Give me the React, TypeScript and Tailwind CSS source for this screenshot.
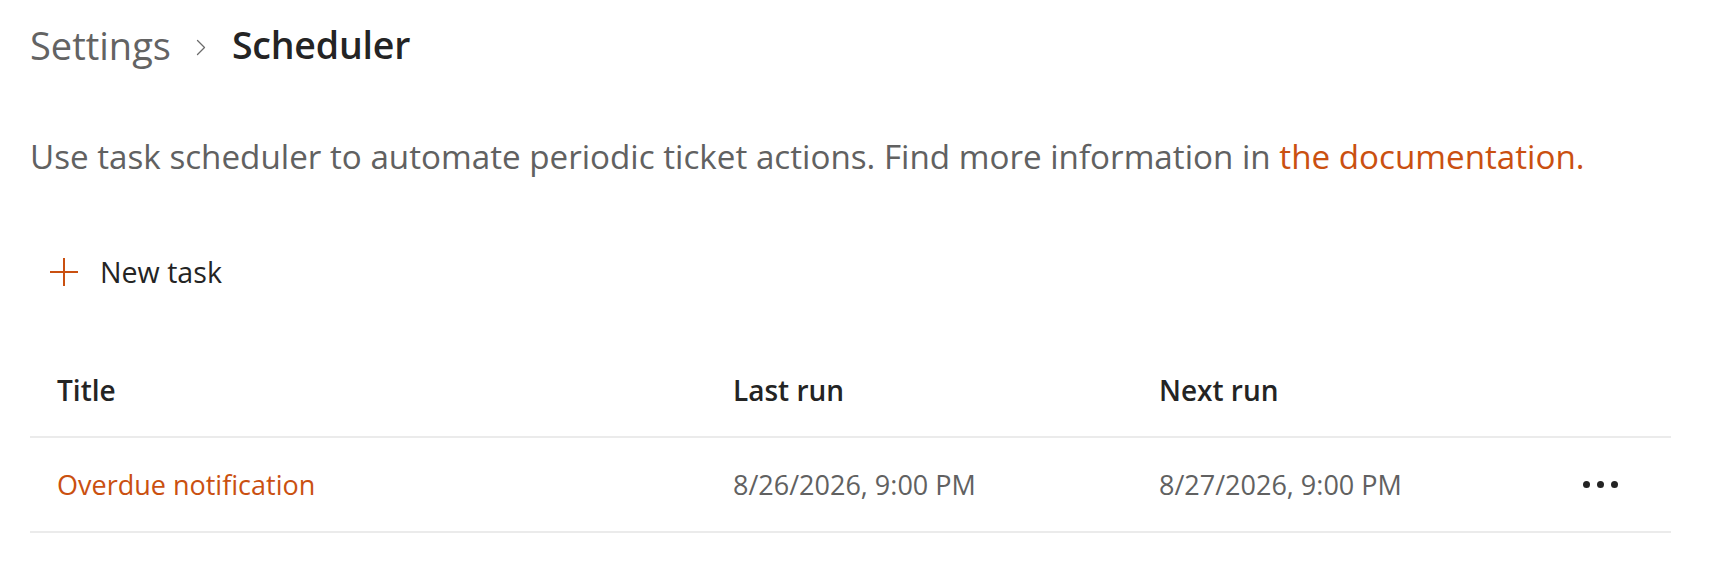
import React from "react";

function Chevron() {
  return (
    <svg width="10" height="17" viewBox="0 0 10 17" className="ml-[25px] mr-[26px] mt-[4px]" fill="none">
      <polyline points="1.5,1.5 8.5,8.5 1.5,15.5" stroke="#6b6b6b" strokeWidth="1.3" strokeLinecap="round" strokeLinejoin="round" />
    </svg>
  );
}

function Plus() {
  return (
    <svg width="28" height="28" viewBox="0 0 28 28" fill="none">
      <line x1="14" y1="0" x2="14" y2="28" stroke="#ca5010" strokeWidth="2" />
      <line x1="0" y1="14" x2="28" y2="14" stroke="#ca5010" strokeWidth="2" />
    </svg>
  );
}

export default function App() {
  return (
    <div className="min-h-screen bg-white font-['Open_Sans',sans-serif]">
      <div className="ml-[30px] w-[1641px] pt-[26px]">
        <nav className="flex items-center h-[38px] text-[38px] leading-[38px]">
          <span className="text-[#636363]">Settings</span>
          <Chevron />
          <span className="font-semibold text-[#242424] text-[37.5px] tracking-[-0.2px]">Scheduler</span>
        </nav>

        <p className="mt-[76px] text-[33.2px] leading-[33px] text-[#616161]">
          Use task scheduler to automate periodic ticket actions. Find more information in{" "}
          <a className="text-[#ca5010] cursor-pointer">the documentation.</a>
        </p>

        <button className="mt-[85px] ml-[20px] flex items-center gap-[22px] h-[28px]">
          <Plus />
          <span className="text-[28.6px] leading-[28px] text-[#242424]">New task</span>
        </button>

        <div className="mt-[58px]">
          <div className="grid grid-cols-[676px_426px_423px_116px] h-[94px] items-center border-b-2 border-[#ebebeb] text-[28px] leading-[28px] font-semibold text-[#242424]">
            <div className="pl-[27px]">Title</div>
            <div className="pl-[27px]">Last run</div>
            <div className="pl-[27px]">Next run</div>
            <div></div>
          </div>
          <div className="grid grid-cols-[676px_426px_423px_116px] h-[95px] items-center border-b-2 border-[#ebebeb] text-[27px] leading-[27px]">
            <div className="pl-[27px] text-[#ca5010]">Overdue notification</div>
            <div className="pl-[27px] text-[#616161]">8/26/2026, 9:00 PM</div>
            <div className="pl-[27px] text-[#616161]">8/27/2026, 9:00 PM</div>
            <div className="pl-[28px] flex items-center gap-[7px]">
              <span className="block w-[7px] h-[7px] rounded-full bg-[#242424]" />
              <span className="block w-[7px] h-[7px] rounded-full bg-[#242424]" />
              <span className="block w-[7px] h-[7px] rounded-full bg-[#242424]" />
            </div>
          </div>
        </div>
      </div>
    </div>
  );
}
